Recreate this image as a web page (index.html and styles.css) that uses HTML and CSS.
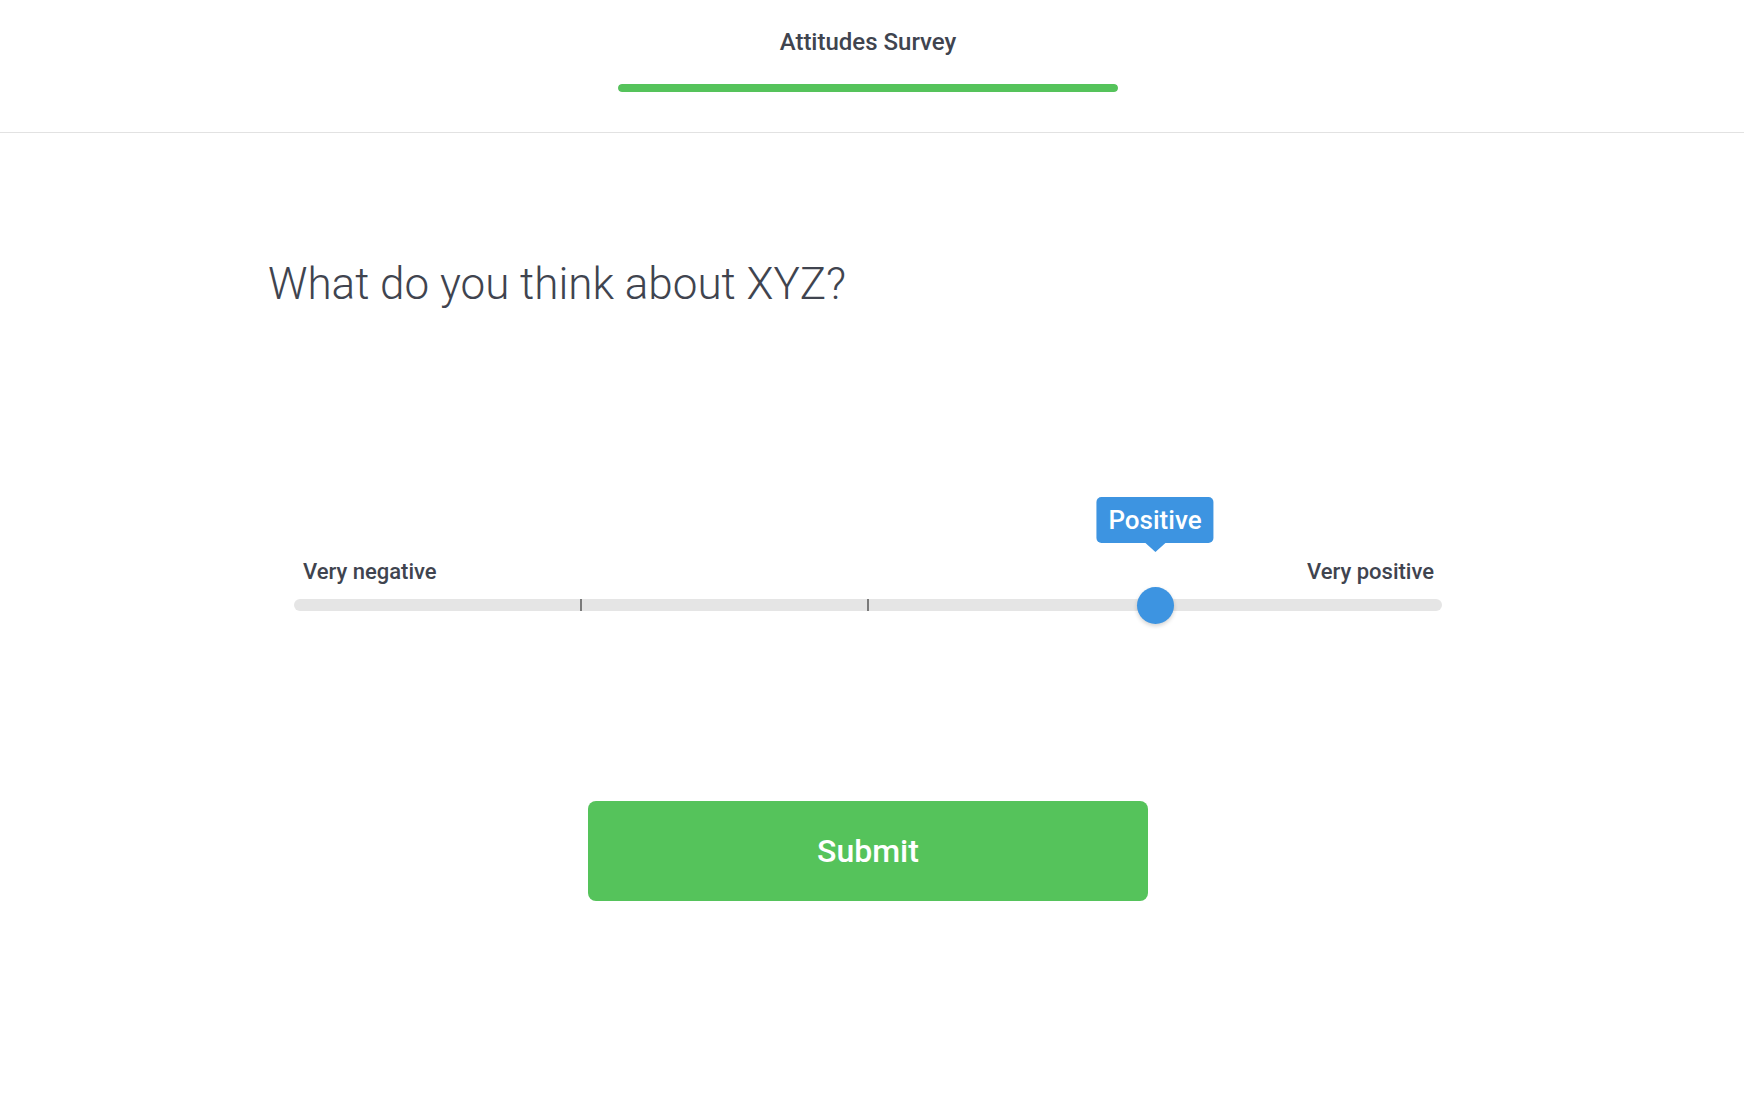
FILE: index.html
```html
<!DOCTYPE html>
<html lang="en">
<head>
<meta charset="utf-8">
<title>Attitudes Survey</title>
<link rel="stylesheet" href="styles.css">
</head>
<body>
<header class="top">
  <div class="top-inner">
    <h1 class="survey-title">Attitudes Survey</h1>
    <div class="progress"><div class="progress-fill"></div></div>
  </div>
</header>
<main class="content">
  <h2 class="question">What do you think about XYZ?</h2>
  <div class="scale">
    <div class="scale-labels">
      <span class="scale-label">Very negative</span>
      <span class="scale-label">Very positive</span>
    </div>
    <div class="track">
      <span class="tick tick-25"></span>
      <span class="tick tick-50"></span>
      <div class="thumb">
        <div class="tooltip">Positive</div>
      </div>
    </div>
  </div>
  <div class="actions">
    <button class="submit" type="button">Submit</button>
  </div>
</main>
</body>
</html>
```

FILE: styles.css
```css
* { box-sizing: border-box; }

html, body {
  margin: 0;
  padding: 0;
  background: #ffffff;
}

body {
  font-family: Roboto, "Noto Sans", "Liberation Sans", sans-serif;
  color: #40444f;
  width: 1744px;
  height: 1098px;
  overflow: hidden;
}

.top {
  height: 133px;
  border-bottom: 1px solid #e2e2e2;
}

.top-inner {
  width: 1736px;
  display: flex;
  flex-direction: column;
  align-items: center;
  padding-top: 28px;
}

.survey-title {
  margin: 0;
  font-size: 24px;
  line-height: 28px;
  font-weight: 500;
  color: #40444f;
}

.progress {
  margin-top: 28px;
  width: 500px;
  height: 8px;
  border-radius: 4px;
  background: #e6e6e6;
  overflow: hidden;
}

.progress-fill {
  width: 100%;
  height: 100%;
  background: #55c35b;
  border-radius: 4px;
}

.content {
  width: 1200px;
  margin-left: 268px;
  display: flex;
  flex-direction: column;
}

.question {
  margin: 124px 0 0 0;
  font-size: 44px;
  line-height: 55px;
  font-weight: 300;
  color: #40444f;
}

.scale {
  margin: 247px 26px 0 26px;
  display: flex;
  flex-direction: column;
}

.scale-labels {
  display: flex;
  justify-content: space-between;
  padding: 0 8px 0 9px;
}

.scale-label {
  font-size: 22px;
  line-height: 25px;
  font-weight: 500;
  color: #40444f;
}

.track {
  position: relative;
  margin-top: 15px;
  height: 12px;
  border-radius: 6px;
  background: #e5e5e5;
}

.tick {
  position: absolute;
  top: 0;
  width: 2px;
  height: 12px;
  margin-left: -1px;
  background: #7b7b7b;
}

.tick-25 { left: 25%; }
.tick-50 { left: 50%; }

.thumb {
  position: absolute;
  left: 75%;
  top: 50%;
  width: 37px;
  height: 37px;
  margin-left: -18.5px;
  margin-top: -18.5px;
  border-radius: 50%;
  background: #3d94e1;
  box-shadow: 0 2px 4px rgba(0, 0, 0, 0.18);
}

.tooltip {
  position: absolute;
  left: 50%;
  bottom: calc(100% + 44px);
  transform: translateX(-50%);
  height: 46px;
  padding: 0 12px;
  border-radius: 5px;
  background: #3d94e1;
  color: #ffffff;
  font-size: 26px;
  line-height: 46px;
  font-weight: 500;
  white-space: nowrap;
}

.tooltip::after {
  content: "";
  position: absolute;
  left: 50%;
  top: 100%;
  margin-left: -10px;
  border-top: 9px solid #3d94e1;
  border-left: 10px solid transparent;
  border-right: 10px solid transparent;
}

.actions {
  margin-top: 190px;
  display: flex;
  justify-content: center;
}

.submit {
  width: 560px;
  height: 100px;
  border: 0;
  border-radius: 8px;
  background: #55c35b;
  color: #ffffff;
  font-family: Roboto, "Noto Sans", "Liberation Sans", sans-serif;
  font-size: 32px;
  font-weight: 500;
  cursor: pointer;
}
```
